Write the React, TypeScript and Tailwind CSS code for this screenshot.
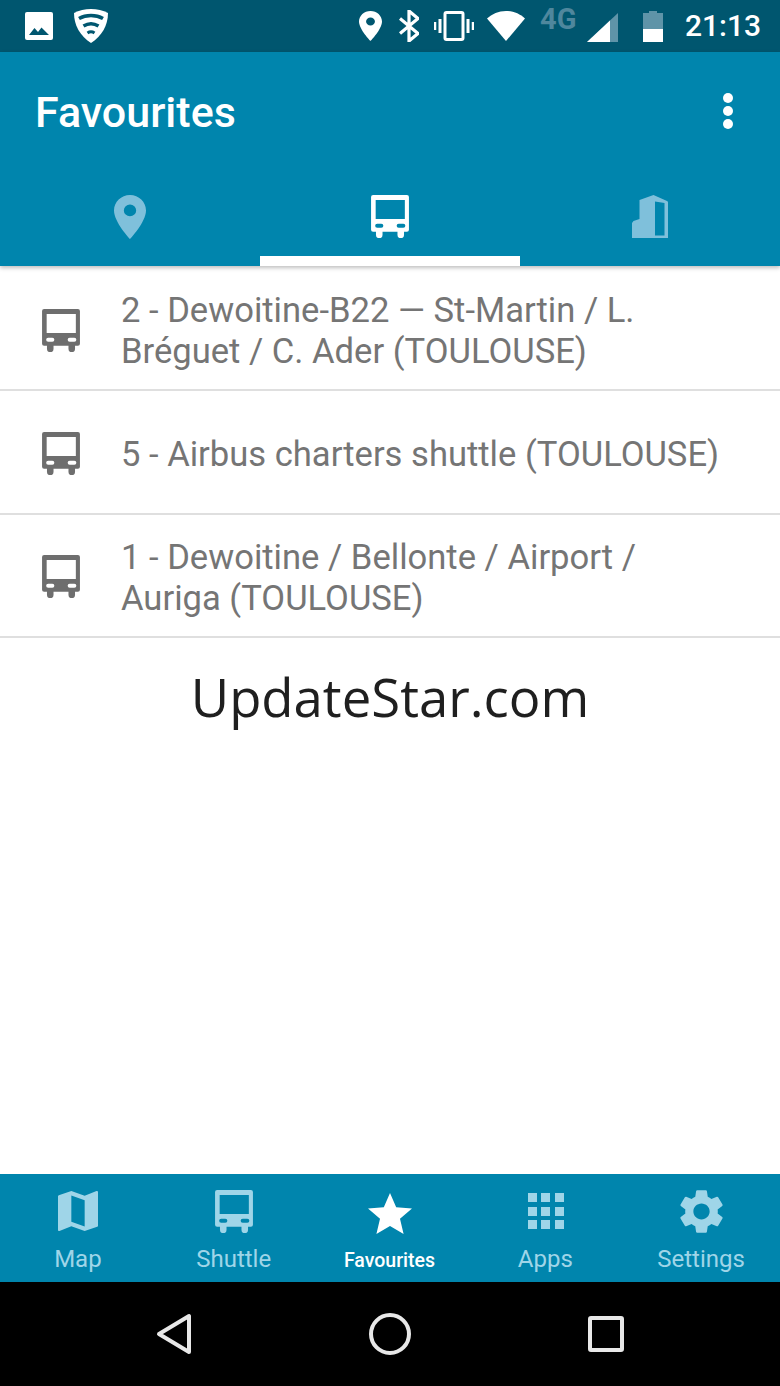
import React from "react";

const PIN = "M12 2C8.13 2 5 5.13 5 9c0 5.25 7 13 7 13s7-7.75 7-13c0-3.87-3.13-7-7-7zm0 9.7a2.7 2.7 0 0 1 0-5.4 2.7 2.7 0 0 1 0 5.4z";
const BUS = "M2 0h33a2 2 0 0 1 2 2v32a2 2 0 0 1-2 2h-2.800v3a3.200 3.200 0 0 1-6.400 0v-3H11.200v3a3.200 3.200 0 0 1-6.400 0v-3H2a2 2 0 0 1-2-2V2a2 2 0 0 1 2-2zM4.500 5v18.500h28.500V5zM6 28a1.500 1.500 0 0 0 0 4h4a1.500 1.500 0 0 0 0-4zM27 28a1.500 1.500 0 0 0 0 4h4.500a1.500 1.500 0 0 0 0-4z";
const GEAR = "M19.14 12.94c.04-.3.06-.61.06-.94 0-.32-.02-.64-.07-.94l2.03-1.58a.49.49 0 0 0 .12-.61l-1.92-3.32a.488.488 0 0 0-.59-.22l-2.39.96c-.5-.38-1.03-.7-1.62-.94l-.36-2.54a.484.484 0 0 0-.48-.41h-3.84c-.24 0-.43.17-.47.41l-.36 2.54c-.59.24-1.13.57-1.62.94l-2.39-.96c-.22-.08-.47 0-.59.22L2.74 8.87c-.12.21-.08.47.12.61l2.03 1.58c-.05.3-.09.63-.09.94s.02.64.07.94l-2.03 1.58a.49.49 0 0 0-.12.61l1.92 3.32c.12.22.37.29.59.22l2.39-.96c.5.38 1.03.7 1.62.94l.36 2.54c.05.24.24.41.48.41h3.84c.24 0 .44-.17.47-.41l.36-2.54c.59-.24 1.13-.56 1.62-.94l2.39.96c.22.08.47 0 .59-.22l1.92-3.32c.12-.22.07-.47-.12-.61l-2.01-1.58zM12 15.6c-1.98 0-3.6-1.62-3.6-3.6s1.62-3.6 3.6-3.6 3.6 1.62 3.6 3.6-1.62 3.6-3.6 3.6z";
const MAP = "M20.5 3l-.16.03L15 5.1 9 3 3.36 4.9c-.21.07-.36.25-.36.48V20.5c0 .28.22.5.5.5l.16-.03L9 18.9l6 2.1 5.64-1.9c.21-.07.36-.25.36-.48V3.5c0-.28-.22-.5-.5-.5zM15 19l-6-2.11V5l6 2.11V19z";
const STAR = "M12 17.27L18.18 21l-1.64-7.03L22 9.24l-7.19-.61L12 2 9.19 8.63 2 9.24l5.46 4.73L5.82 21z";

function Bus({ className }: { className: string }) {
  return (
    <svg viewBox="0 0 37 42" className={className} fill="currentColor">
      <path fillRule="evenodd" d={BUS} />
    </svg>
  );
}

function Pin({ className }: { className: string }) {
  return (
    <svg viewBox="5 2 14 20" preserveAspectRatio="none" className={className} fill="currentColor">
      <path fillRule="evenodd" d={PIN} />
    </svg>
  );
}

function StatusBar() {
  return (
    <div className="flex h-[52px] shrink-0 items-center bg-[#00566f] pl-[25px] text-white">
      <svg viewBox="0 0 28 28" className="h-[28px] w-[28px]">
        <rect width="28" height="28" rx="2" fill="#fff" />
        <path d="M4 23l5.500-7 3.500 4 3.500-4.500L24 23z" fill="#00566f" />
      </svg>
      <svg viewBox="0 0 34 34" className="ml-[21px] h-[34px] w-[34px]">
        <path d="M17 0c6 0 12 1.500 17 4 0 12-6 23-17 30C6 27 0 16 0 4c5-2.500 11-4 17-4z" fill="#fff" />
        <g fill="none" stroke="#00566f">
          <path d="M5 9.500c7-4 17-4 24 0" strokeWidth="3.600" />
          <path d="M9.500 17c4.800-3 10.200-3 15 0" strokeWidth="3.400" />
          <path d="M13.500 24c2.200-1.500 4.800-1.500 7 0" strokeWidth="3" />
        </g>
      </svg>
      <Pin className="ml-[251px] h-[30px] w-[23px]" />
      <svg viewBox="0 0 20 32" className="ml-[17px] h-[32px] w-[20px]" fill="none" stroke="#fff" strokeWidth="3.200">
        <path d="M1 8.500l18 15L10 31V1l9 7.500L1 23.500" />
      </svg>
      <svg viewBox="0 0 40 30" className="ml-[15px] h-[30px] w-[40px]" fill="none" stroke="#fff">
        <rect x="11" y="1.500" width="18" height="27" rx="1.500" strokeWidth="3" />
        <path d="M6 8v14M34 8v14" strokeWidth="3" />
        <path d="M1 11v8M39 11v8" strokeWidth="2.500" />
      </svg>
      <svg viewBox="0 0 38 30" className="ml-[13px] h-[30px] w-[38px]" fill="#fff">
        <path d="M19 30L0 7.500C5 3 11.500 0 19 0s14 3 19 7.500z" />
      </svg>
      <span className="mb-[15px] ml-[15px] w-[37px] font-['Roboto',sans-serif] text-[29px] leading-[24px] font-bold text-[#4f879d]">4G</span>
      <svg viewBox="0 0 31 29" className="ml-[10px] mt-[3px] h-[29px] w-[31px]">
        <path d="M31 0v29H0z" fill="#5f94a8" />
        <path d="M23 7.500V29H0z" fill="#fff" />
      </svg>
      <svg viewBox="0 0 20 31" className="ml-[25px] h-[31px] w-[20px]">
        <path d="M6 0h8v2h6v16H0V2h6z" fill="#5f94a8" />
        <path d="M0 18h20v13H0z" fill="#fff" />
      </svg>
      <span className="ml-[22px] font-['Roboto',sans-serif] text-[30px] leading-[36px] font-medium">21:13</span>
    </div>
  );
}

function Header() {
  return (
    <div className="relative z-10 shrink-0 bg-[#0085ad] text-white shadow-[0_2px_4px_rgba(0,0,0,0.25)]">
      <div className="flex h-[128px] items-start justify-between pl-[35px] pr-[47px]">
        <h1 className="mt-[35px] font-['Roboto',sans-serif] text-[43px] leading-[50px] font-medium">Favourites</h1>
        <div className="mt-[41px] flex flex-col gap-[3px]">
          <span className="h-[10px] w-[10px] rounded-full bg-white" />
          <span className="h-[10px] w-[10px] rounded-full bg-white" />
          <span className="h-[10px] w-[10px] rounded-full bg-white" />
        </div>
      </div>
      <div className="grid h-[86px] grid-cols-3">
        <div className="flex items-start justify-center pt-[15px]">
          <Pin className="h-[44px] w-[32px] text-[#7fc0db]" />
        </div>
        <div className="flex items-start justify-center border-b-[10px] border-white pt-[15px]">
          <Bus className="h-[43px] w-[38px] text-white" />
        </div>
        <div className="flex items-start justify-center pt-[15px]">
          <svg viewBox="0 0 36 43" className="h-[43px] w-[36px]" fill="#7fc0db">
            <path fillRule="evenodd" d="M0 43V28l1.500-2 6-2V5L21.500 0 35 6c.6.300 1 .8 1 1.500V43zM23 6.500v34h9.500V8z" />
          </svg>
        </div>
      </div>
    </div>
  );
}

function Row({ lines, className }: { lines: string[]; className: string }) {
  return (
    <div className={`flex items-center border-b-2 border-[#dfdfdf] pl-[42px] ${className}`}>
      <Bus className="h-[43px] w-[38px] shrink-0 text-[#6e6e6e]" />
      <p className="ml-[41px] mt-[2px] font-['Roboto',sans-serif] text-[34.600px] leading-[41px] text-[#757575]">
        {lines.map((l) => (
          <span key={l} className="block whitespace-nowrap">{l}</span>
        ))}
      </p>
    </div>
  );
}

function NavItem({ label, icon, active }: { label: string; icon: React.ReactNode; active?: boolean }) {
  return (
    <div className="flex flex-col items-center">
      <div className="flex h-[66px] items-center justify-center">{icon}</div>
      <span
        className={
          active
            ? "mt-[2px] font-['Roboto',sans-serif] text-[19.500px] leading-[30px] font-medium text-white"
            : "font-['Roboto',sans-serif] text-[24px] leading-[30px] text-[#9fd5e8]"
        }
      >
        {label}
      </span>
    </div>
  );
}

function BottomNav() {
  const iconColor = "#9fd5e8";
  return (
    <div className="grid h-[108px] shrink-0 grid-cols-5 bg-[#0085ad] pr-[1px] pt-[4px]">
      <NavItem
        label="Map"
        icon={
          <svg viewBox="3 3 18 18" className="h-[40px] w-[40px]" fill={iconColor}>
            <path fillRule="evenodd" d={MAP} />
          </svg>
        }
      />
      <NavItem label="Shuttle" icon={<Bus className="h-[43px] w-[38px] text-[#9fd5e8]" />} />
      <NavItem
        label="Favourites"
        active
        icon={
          <svg viewBox="2 2 20 19" className="ml-[2px] mt-[4px] h-[41px] w-[44px]" fill="#fff" preserveAspectRatio="none">
            <path d={STAR} />
          </svg>
        }
      />
      <NavItem
        label="Apps"
        icon={
          <div className="grid grid-cols-3 gap-[4.500px] pl-[1px]">
            {Array.from({ length: 9 }).map((_, i) => (
              <span key={i} className="h-[9px] w-[9px] bg-[#9fd5e8]" />
            ))}
          </div>
        }
      />
      <NavItem
        label="Settings"
        icon={
          <svg viewBox="2.500 1.800 19 20.400" className="h-[45px] w-[43px]" fill={iconColor} preserveAspectRatio="none">
            <path fillRule="evenodd" d={GEAR} />
          </svg>
        }
      />
    </div>
  );
}

function SystemNav() {
  return (
    <div className="flex h-[104px] shrink-0 items-center justify-center gap-[177px] bg-black">
      <svg viewBox="0 0 36 42" className="h-[42px] w-[36px]" fill="none" stroke="#e8e8e8" strokeWidth="4" strokeLinejoin="round">
        <path d="M33 3v36L3 21z" />
      </svg>
      <svg viewBox="0 0 42 42" className="h-[42px] w-[42px]" fill="none" stroke="#e8e8e8" strokeWidth="4">
        <circle cx="21" cy="21" r="19" />
      </svg>
      <svg viewBox="0 0 36 36" className="h-[36px] w-[36px]" fill="none" stroke="#e8e8e8" strokeWidth="4" strokeLinejoin="round">
        <rect x="2" y="2" width="32" height="32" rx="1" />
      </svg>
    </div>
  );
}

export default function App() {
  return (
    <div className="flex h-[1386px] w-[780px] flex-col overflow-hidden bg-white">
      <StatusBar />
      <Header />
      <div className="shrink-0">
        <Row className="h-[125px] pt-[5px]" lines={["2 - Dewoitine-B22 — St-Martin / L.", "Bréguet / C. Ader (TOULOUSE)"]} />
        <Row className="h-[124px] pt-[2px]" lines={["5 - Airbus charters shuttle (TOULOUSE)"]} />
        <Row className="h-[123px] pt-[2px]" lines={["1 - Dewoitine / Bellonte / Airport /", "Auriga (TOULOUSE)"]} />
      </div>
      <div className="flex-1 pt-[24px] text-center font-['Open_Sans',sans-serif] text-[52.700px] leading-[70px] text-[#1f1f1f]">
        UpdateStar.com
      </div>
      <BottomNav />
      <SystemNav />
    </div>
  );
}
